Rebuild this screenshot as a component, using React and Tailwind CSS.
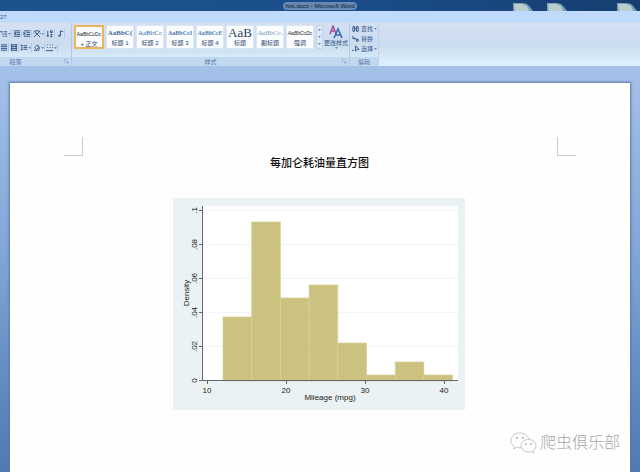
import React from 'react';

const STYLES = [
  { name: '+ 正文', sample: 'AaBbCcDc', look: "font-['Liberation_Sans'] text-[5px] text-[#222222]" },
  { name: '标题 1', sample: 'AaBbC(', look: "font-['Liberation_Serif'] text-[7px] font-bold text-[#3f6796]" },
  { name: '标题 2', sample: 'AaBbCc', look: "font-['Liberation_Serif'] text-[7px] text-[#3568a4]" },
  { name: '标题 3', sample: 'AaBbCcI', look: "font-['Liberation_Serif'] text-[6px] font-bold text-[#4b78b0]" },
  { name: '标题 4', sample: 'AaBbCcE', look: "font-['Liberation_Serif'] text-[6px] font-bold italic text-[#4b78b0]" },
  { name: '标题', sample: 'AaB', look: "font-['Liberation_Serif'] text-[13px] text-[#2b3f60]" },
  { name: '副标题', sample: 'AaBbCc.', look: "font-['Liberation_Serif'] text-[7px] italic text-[#7b9cc0]" },
  { name: '强调', sample: 'AaBbCcDc', look: "font-['Liberation_Sans'] text-[5px] italic text-[#222222]" },
];

const BARS = [64, 159, 83, 96, 38, 6, 19, 6];
const Y_TICKS = [
  ['.1', 12],
  ['.08', 46],
  ['.06', 80],
  ['.04', 114],
  ['.02', 148],
  ['0', 182],
];
const X_TICKS = [
  ['10', 34],
  ['20', 113],
  ['30', 192],
  ['40', 271],
];

const ICONS = {
  list: 'M0 2h3M4 2h4M2 4.5h2M5 4.5h3M3 7h2M6 7h2',
  outdent: 'M1 1h7M4 3h4M4 5h4M1 7h7M3 2.5L1 4l2 1.5z',
  indent: 'M1 1h7M4 3h4M4 5h4M1 7h7M1 2.5L3 4 1 5.5z',
  asian: 'M1 1l7 7M8 1L1 8M2 1h5M1 3v1M8 3v1',
  sort: 'M2 1v6M1 6l1 1.5L3 6M5 1h2v2H5zM5 5h2L5 7.5h2',
  mark: 'M5 1v5M5 1l3 1M5 6c-1-1-3 0-2 1s2 0 2-1',
  justify: 'M1 1h7M1 3h7M1 5h7M1 7h7',
  spread: 'M1 1h7M1 3h7M1 5h7M1 7h7M2 0v8M7 0v8',
  spacing: 'M2 1v6M1 2l1-1 1 1M1 6l1 1 1-1M4 2h4M4 4h4M4 6h4',
  fill: 'M2 4l3-3 2 3-3 2zM7 4v2M1 7h6',
  border: 'M1 1h1M4 1h1M7 1h1M1 4h1M4 4h1M7 4h1M0 7.5h8',
  find: 'M1 2h2v5H1zM5 2h2v5H5zM3 4h2M2 1v1M6 1v1',
  replace: 'M1 1v3h3M3 3l1 1-1 1M5 4v3h2V5H5',
  select: 'M4 1v6l2-2h2L4 1M0 6h2',
};

function Icon({ name }) {
  return (
    <svg viewBox="0 0 9 9" className="size-2 shrink-0" fill="none" stroke="#34558a" strokeWidth="1.1" aria-hidden="true">
      <path d={ICONS[name]} />
    </svg>
  );
}

function Caret() {
  return (
    <svg viewBox="0 0 4 3" className="h-[2px] w-[3px] shrink-0" aria-hidden="true">
      <path d="M0 0h4L2 3z" fill="#6a86b0" />
    </svg>
  );
}

function ToolButton({ icon, label, caret }) {
  return (
    <button type="button" aria-label={label} className="flex h-[9px] items-center border-r border-[#b4c8e2]">
      <Icon name={icon} />
      {caret && <Caret />}
    </button>
  );
}

function GroupLabel({ children, launcher }) {
  return (
    <div className="relative flex h-[9px] items-center justify-center bg-[#c1d8f0] text-[6px] leading-none text-[#5675a6]">
      {children}
      {launcher && (
        <svg viewBox="0 0 5 5" className="absolute right-[2px] top-[2px] size-[5px]" fill="none" stroke="#7290ba" strokeWidth=".7" aria-hidden="true">
          <path d="M0 4V0h4M2 2l2 2M4 2.5V4H2.5" />
        </svg>
      )}
    </div>
  );
}

function TitleBar() {
  return (
    <header className="relative flex h-[11px] items-center justify-center overflow-hidden bg-linear-to-r from-[#1d528f] via-[#1b4f8c] to-[#163e70]">
      <h1 className="rounded-sm bg-[#6788b0] px-[2px] text-[6px] leading-[8px] text-[#0c1f3a]">hist.docx - Microsoft Word</h1>
      <svg viewBox="0 0 130 11" className="absolute right-0 top-0 h-[11px] w-[130px]" aria-hidden="true">
        {[3, 37, 107].map((x) => (
          <g key={x} transform={`translate(${x} 3)`}>
            <path d="M0 0h10l4 1 3 3 3 4H0z" fill="#7f9fb4" />
            <path d="M1 1h8l5 2 2 5H2z" fill="#b9cfce" />
          </g>
        ))}
      </svg>
    </header>
  );
}

function Ribbon() {
  return (
    <div className="flex h-11 overflow-hidden border-t border-[#cbd9f1] bg-linear-to-b from-[#d5e0f3] via-[#cbdcee] to-[#def3ff]">
      <section className="flex w-[72px] flex-col border-r border-[#b3c8e3]">
        <div className="flex flex-1 flex-col gap-[5px] pt-[6px]">
          <div className="flex items-center gap-px">
            <ToolButton icon="list" label="多级列表" caret />
            <ToolButton icon="outdent" label="减少缩进量" />
            <ToolButton icon="indent" label="增加缩进量" />
            <ToolButton icon="asian" label="中文版式" caret />
            <ToolButton icon="sort" label="排序" />
            <ToolButton icon="mark" label="显示编辑标记" />
          </div>
          <div className="flex items-center gap-px">
            <ToolButton icon="justify" label="两端对齐" />
            <ToolButton icon="spread" label="分散对齐" />
            <ToolButton icon="spacing" label="行距" caret />
            <ToolButton icon="fill" label="底纹" caret />
            <ToolButton icon="border" label="边框" caret />
          </div>
        </div>
        <GroupLabel launcher><span className="pr-10">段落</span></GroupLabel>
      </section>

      <section className="flex w-[278px] flex-col border-r border-[#b3c8e3]">
        <div className="flex flex-1 items-start pl-[2px] pt-[2px]">
          <div className="flex gap-[2px]">
            {STYLES.map((s, i) => (
              <button
                key={s.name}
                type="button"
                aria-pressed={i === 0}
                className={`flex h-6 flex-col items-center bg-[#fbfdff] ${
                  i === 0 ? 'w-[30px] border-2 border-[#eeb65c]' : 'w-7 border border-[#dbe6f4]'
                }`}
              >
                <span className={`flex h-[14px] shrink-0 items-center justify-center whitespace-nowrap leading-[14px] ${s.look}`}>
                  {s.sample}
                </span>
                <span className="text-[6px] leading-[7px] text-[#2d426e]">{s.name}</span>
              </button>
            ))}
          </div>
          <div className="ml-[2px] flex h-6 w-[7px] flex-col items-center justify-between border border-[#c4d5eb] bg-[#dce8f6] py-[3px]">
            <Caret />
            <Caret />
            <Caret />
          </div>
          <button type="button" className="flex flex-1 flex-col items-center text-[6px] leading-[8px] text-[#34558a]">
            <svg viewBox="0 0 14 14" className="size-[14px]" fill="none" strokeWidth="1.6" aria-hidden="true">
              <path d="M1 9L4 1l3 8M2 6h4" stroke="#a6559c" />
              <path d="M5 13L9 4l4 9M7 10h5" stroke="#3c69b5" />
            </svg>
            <span className="whitespace-nowrap">更改样式</span>
            <Caret />
          </button>
        </div>
        <GroupLabel launcher>样式</GroupLabel>
      </section>

      <section className="flex w-[29px] flex-col border-r border-[#c0d2e9]">
        <div className="flex flex-1 flex-col gap-px pl-[2px] pt-px text-[6px] leading-none text-[#34558a]">
          {[
            ['find', '查找', true],
            ['replace', '替换', false],
            ['select', '选择', true],
          ].map(([icon, label, caret]) => (
            <button key={label} type="button" className="flex h-[9px] items-center gap-px whitespace-nowrap">
              <Icon name={icon} />
              <span>{label}</span>
              {caret && <Caret />}
            </button>
          ))}
        </div>
        <GroupLabel>编辑</GroupLabel>
      </section>
    </div>
  );
}

function Histogram() {
  return (
    <svg viewBox="0 0 292 212" className="w-[292px]" role="img" aria-label="Histogram" fontFamily="Liberation Sans, Arial, sans-serif" fontSize="8" fill="#222222">
      <rect width="292" height="212" fill="#eaf2f3" />
      <rect x="29" y="8" width="256" height="175" fill="#ffffff" />
      {Y_TICKS.map(([label, y]) => (
        <g key={label}>
          <path d={`M30 ${y + 0.5}H285`} stroke="#f1f5f6" />
          <path d={`M26 ${y + 0.5}h3`} stroke="#666666" />
          <text transform={`translate(24 ${y + 0.5}) rotate(-90)`} textAnchor="middle">{label}</text>
        </g>
      ))}
      {BARS.map((h, i) => (
        <rect key={i} x={50 + i * 28.7} y={183 - h} width="28.7" height={h} fill="#cac27e" stroke="#d8d19b" strokeWidth=".7" />
      ))}
      <path d="M29.5 8v174.500H285" fill="none" stroke="#666666" />
      {X_TICKS.map(([label, x]) => (
        <g key={label}>
          <path d={`M${x + 0.5} 183v3`} stroke="#666666" />
          <text x={x} y="195" textAnchor="middle">{label}</text>
        </g>
      ))}
      <text x="157" y="202" textAnchor="middle">Mileage (mpg)</text>
      <text transform="translate(16 95) rotate(-90)" textAnchor="middle">Density</text>
    </svg>
  );
}

function Watermark() {
  return (
    <div className="absolute bottom-[17px] right-[10px] flex items-center gap-[2px]">
      <svg viewBox="0 0 28 22" className="h-[22px] w-7" fill="#ffffff" stroke="#b8b8b8" strokeWidth=".8" aria-hidden="true">
        <path d="M10 1C5 1 1 4 1 8.500c0 2.500 1.300 4.500 3.300 5.800L3.500 17l3.200-1.700c1 .3 2.200.5 3.300.5 5 0 9-3.300 9-7.300S15 1 10 1z" />
        <path d="M18.500 7.500c-4.300 0-7.500 2.800-7.500 6.200s3.200 6.200 7.500 6.200c1 0 1.900-.1 2.700-.4l2.700 1.500-.7-2.400c1.700-1.100 2.800-2.900 2.800-4.900 0-3.400-3.200-6.200-7.500-6.200z" />
        <g fill="#aaaaaa" stroke="none">
          <circle cx="7" cy="6" r="1" />
          <circle cx="13" cy="6" r="1" />
          <circle cx="16" cy="12" r=".9" />
          <circle cx="21" cy="12" r=".9" />
        </g>
      </svg>
      <span className="text-[16px] font-light leading-6 text-[#a6a6a6]">爬虫俱乐部</span>
    </div>
  );
}

function Page() {
  return (
    <article className="relative flex flex-1 flex-col bg-[#fefefe] shadow-[0_0_2px_1px_#5878a0]">
      <div className="flex justify-between px-[54px] pt-[54px]">
        <span className="size-[19px] border-b border-r border-[#cccccc]" />
        <span className="size-[19px] border-b border-l border-[#cccccc]" />
      </div>
      <h2 className="pr-px text-center font-['Liberation_Serif','Noto_Sans_CJK_SC',serif] text-[11px] font-medium leading-[14px] text-[#111111]">每加仑耗油量直方图</h2>
      <div className="flex justify-center pt-7 pr-[2px]">
        <Histogram />
      </div>
      <Watermark />
    </article>
  );
}

export default function App() {
  return (
    <div className="flex min-h-screen flex-col overflow-hidden font-['Liberation_Sans','Noto_Sans_CJK_SC',sans-serif]">
      <TitleBar />
      <nav className="flex h-[11px] items-center bg-[#bfdafd] text-[6px] leading-none text-[#3c5c91]">
        <button type="button">27</button>
      </nav>
      <Ribbon />
      <main className="flex flex-1 flex-col bg-linear-to-b from-[#a5c1e8] via-[#7da3d6] to-[#5079b2] px-[10px] pt-[17px]">
        <Page />
      </main>
    </div>
  );
}
